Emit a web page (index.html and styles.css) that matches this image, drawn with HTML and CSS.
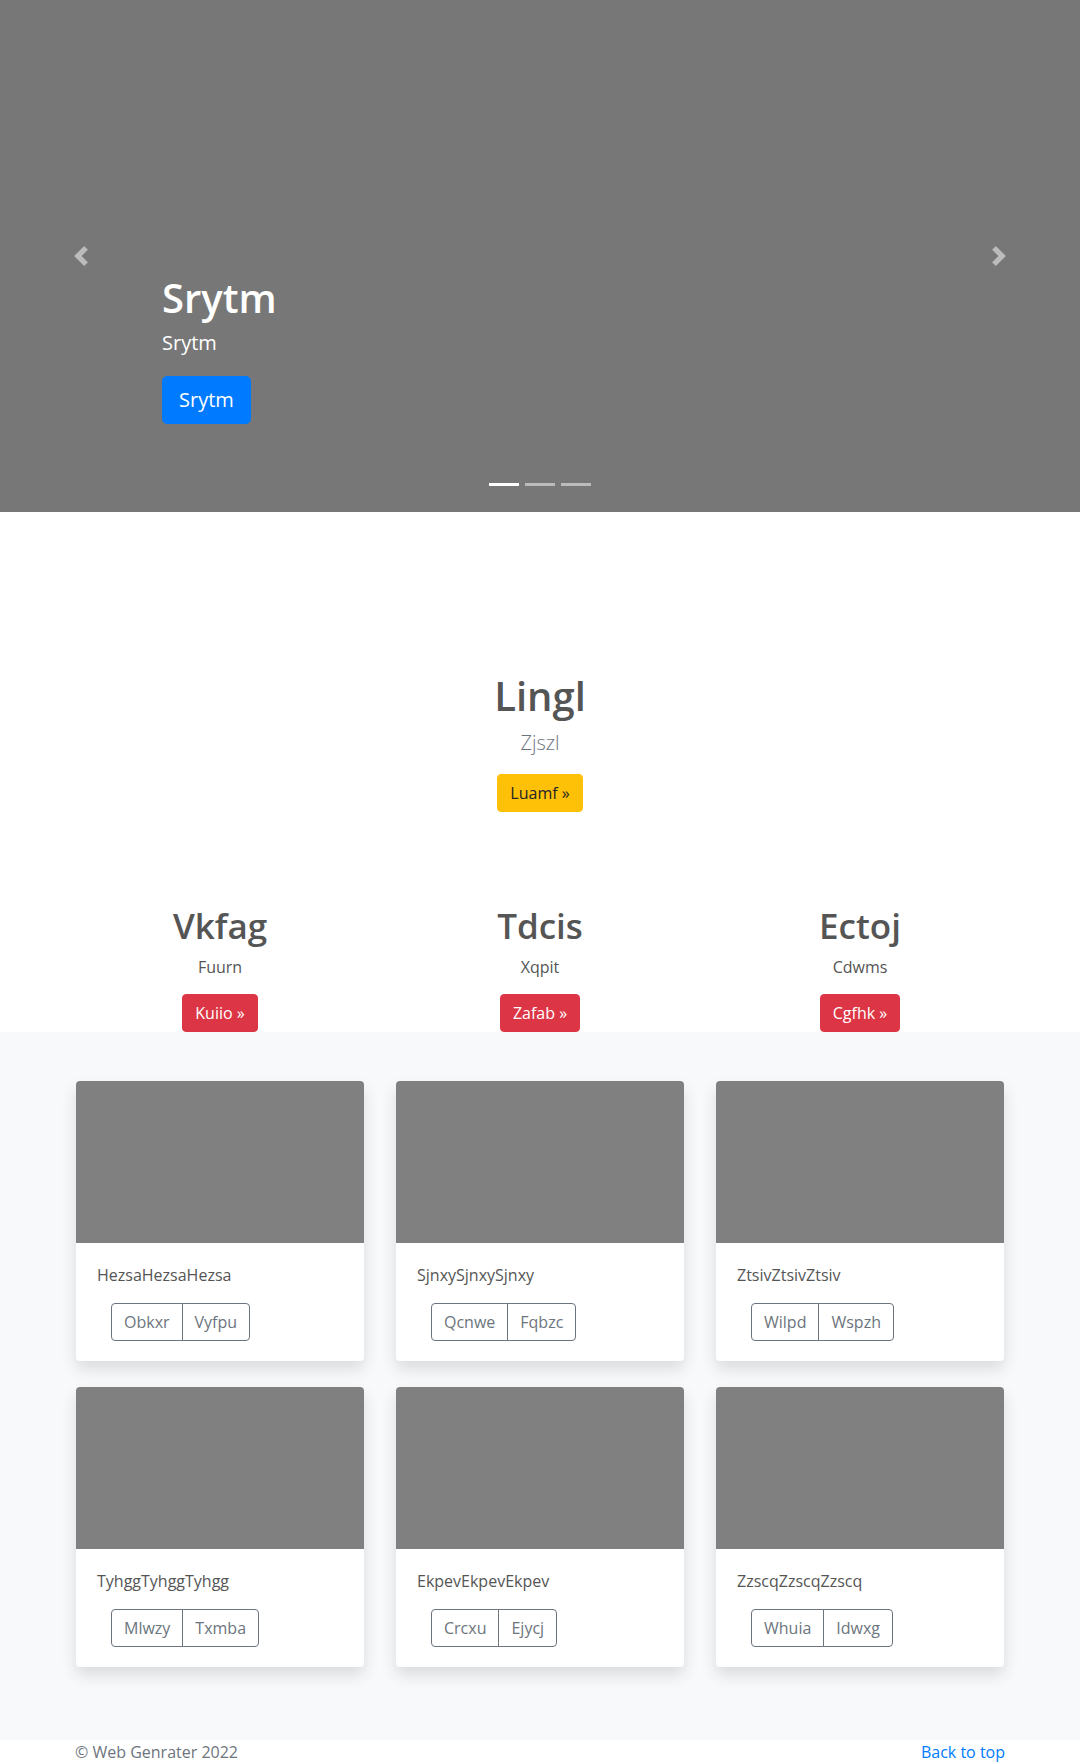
FILE: index.html
```html
<!DOCTYPE html>
<html lang="en">
<head>
<meta charset="utf-8">
<title>Carousel</title>
<link rel="stylesheet" href="styles.css">
</head>
<body>
<main>
  <div class="carousel">
    <div class="slide">
      <div class="caption">
        <h1 class="caption-title">Srytm</h1>
        <p class="caption-text">Srytm</p>
        <div><a class="btn btn-lg btn-primary" href="#">Srytm</a></div>
      </div>
    </div>
    <a class="ctrl ctrl-prev" href="#"><svg width="20" height="20" viewBox="0 0 8 8"><path fill="#fff" d="M5.25 0l-4 4 4 4 1.5-1.5L4.25 4l2.5-2.5L5.25 0z"/></svg></a>
    <a class="ctrl ctrl-next" href="#"><svg width="20" height="20" viewBox="0 0 8 8"><path fill="#fff" d="M2.75 0l-1.5 1.5L3.75 4l-2.5 2.5L2.75 8l4-4-4-4z"/></svg></a>
    <ol class="indicators">
      <li class="active"></li>
      <li></li>
      <li></li>
    </ol>
  </div>

  <section class="intro">
    <h1 class="intro-title">Lingl</h1>
    <p class="lead">Zjszl</p>
    <div><a class="btn btn-warning" href="#">Luamf &raquo;</a></div>

    <div class="marketing">
      <div class="feature">
        <h2 class="feature-title">Vkfag</h2>
        <p class="feature-text">Fuurn</p>
        <div><a class="btn btn-danger" href="#">Kuiio &raquo;</a></div>
      </div>
      <div class="feature">
        <h2 class="feature-title">Tdcis</h2>
        <p class="feature-text">Xqpit</p>
        <div><a class="btn btn-danger" href="#">Zafab &raquo;</a></div>
      </div>
      <div class="feature">
        <h2 class="feature-title">Ectoj</h2>
        <p class="feature-text">Cdwms</p>
        <div><a class="btn btn-danger" href="#">Cgfhk &raquo;</a></div>
      </div>
    </div>
  </section>

  <section class="album">
    <div class="album-grid">
      <div class="card">
        <div class="thumb"></div>
        <div class="card-body">
          <p class="card-text">HezsaHezsaHezsa</p>
          <div class="btn-group"><button class="btn btn-outline">Obkxr</button><button class="btn btn-outline">Vyfpu</button></div>
        </div>
      </div>
      <div class="card">
        <div class="thumb"></div>
        <div class="card-body">
          <p class="card-text">SjnxySjnxySjnxy</p>
          <div class="btn-group"><button class="btn btn-outline">Qcnwe</button><button class="btn btn-outline">Fqbzc</button></div>
        </div>
      </div>
      <div class="card">
        <div class="thumb"></div>
        <div class="card-body">
          <p class="card-text">ZtsivZtsivZtsiv</p>
          <div class="btn-group"><button class="btn btn-outline">Wilpd</button><button class="btn btn-outline">Wspzh</button></div>
        </div>
      </div>
      <div class="card">
        <div class="thumb"></div>
        <div class="card-body">
          <p class="card-text">TyhggTyhggTyhgg</p>
          <div class="btn-group"><button class="btn btn-outline">Mlwzy</button><button class="btn btn-outline">Txmba</button></div>
        </div>
      </div>
      <div class="card">
        <div class="thumb"></div>
        <div class="card-body">
          <p class="card-text">EkpevEkpevEkpev</p>
          <div class="btn-group"><button class="btn btn-outline">Crcxu</button><button class="btn btn-outline">Ejycj</button></div>
        </div>
      </div>
      <div class="card">
        <div class="thumb"></div>
        <div class="card-body">
          <p class="card-text">ZzscqZzscqZzscq</p>
          <div class="btn-group"><button class="btn btn-outline">Whuia</button><button class="btn btn-outline">Idwxg</button></div>
        </div>
      </div>
    </div>
  </section>
</main>

<footer class="footer">
  <p class="copy">&copy; Web Genrater 2022</p>
  <a class="top-link" href="#">Back to top</a>
</footer>
</body>
</html>
```

FILE: styles.css
```css
* { box-sizing: border-box; }

html, body {
  margin: 0;
  padding: 0;
}

body {
  font-family: "Open Sans", "Noto Sans", "Liberation Sans", sans-serif;
  font-size: 16px;
  line-height: 1.5;
  color: #555;
  background: #fff;
}

h1, h2, p { margin: 0; }

a { text-decoration: none; }

/* ---------- buttons ---------- */
.btn {
  display: inline-block;
  font-family: inherit;
  font-size: 16px;
  line-height: 24px;
  padding: 6px 12px;
  border: 1px solid transparent;
  border-radius: 4px;
  cursor: pointer;
  background: transparent;
}

.btn-lg {
  font-size: 20px;
  line-height: 30px;
  padding: 8px 16px;
  border-radius: 5px;
}

.btn-primary { background: #007bff; border-color: #007bff; color: #fff; }
.btn-warning { background: #ffc107; border-color: #ffc107; color: #212529; }
.btn-danger  { background: #dc3545; border-color: #dc3545; color: #fff; }

.btn-outline {
  color: #6c757d;
  border-color: #6c757d;
  background: transparent;
}

/* ---------- carousel ---------- */
.carousel {
  position: relative;
  height: 512px;
  background: #777;
}

.slide {
  height: 100%;
  display: flex;
  flex-direction: column;
  justify-content: flex-end;
  padding: 0 162px 88px;
}

.caption { color: #fff; }

.caption-title {
  font-size: 40px;
  line-height: 48px;
  font-weight: 600;
  margin-bottom: 6px;
}

.caption-text {
  font-size: 20px;
  line-height: 30px;
  margin-bottom: 18px;
}

.ctrl {
  position: absolute;
  top: 0;
  bottom: 0;
  width: 162px;
  display: flex;
  align-items: center;
  justify-content: center;
  opacity: .5;
}

.ctrl svg { display: block; margin-top: -1px; }

.ctrl-prev { left: 0; }
.ctrl-next { right: 0; }

.indicators {
  position: absolute;
  left: 0;
  right: 0;
  bottom: 0;
  margin: 0 0 16px;
  padding: 0;
  list-style: none;
  display: flex;
  justify-content: center;
}

.indicators li {
  width: 30px;
  height: 23px;
  margin: 0 3px;
  border-top: 10px solid transparent;
  border-bottom: 10px solid transparent;
  background: #fff;
  background-clip: padding-box;
  opacity: .5;
}

.indicators li.active { opacity: 1; }

/* ---------- intro & marketing ---------- */
.intro {
  text-align: center;
  padding-top: 160px;
}

.intro-title {
  font-size: 40px;
  line-height: 48px;
  font-weight: 600;
  color: #555;
  margin-bottom: 8px;
}

.lead {
  font-size: 20px;
  line-height: 30px;
  font-weight: 300;
  color: #6c757d;
  margin-bottom: 16px;
}

.marketing {
  width: 960px;
  margin: 93px auto 0;
  display: grid;
  grid-template-columns: repeat(3, 1fr);
}

.feature { padding: 0 15px; }

.feature-title {
  font-size: 35px;
  line-height: 42px;
  font-weight: 600;
  color: #555;
  margin-bottom: 8px;
}

.feature-text {
  color: #555;
  margin-bottom: 15px;
}

/* ---------- album ---------- */
.album {
  background: #f8f9fa;
  padding: 49px 0 73px;
}

.album-grid {
  width: 928px;
  margin: 0 auto;
  display: grid;
  grid-template-columns: repeat(3, 288px);
  column-gap: 32px;
  row-gap: 26px;
}

.card {
  background: #fff;
  border-radius: 4px;
  overflow: hidden;
  box-shadow: 0 8px 16px rgba(0,0,0,.12);
}

.thumb {
  height: 162px;
  background: #808080;
}

.card-body { padding: 20px 20px 20px 21px; }

.card-text {
  color: #555;
  margin-bottom: 16px;
}

.btn-group {
  display: inline-flex;
  margin-left: 14px;
}

.btn-group .btn:first-child {
  border-top-right-radius: 0;
  border-bottom-right-radius: 0;
}

.btn-group .btn + .btn {
  margin-left: -1px;
  border-top-left-radius: 0;
  border-bottom-left-radius: 0;
}

/* ---------- footer ---------- */
.footer {
  width: 930px;
  margin: 0 auto;
  display: flex;
  justify-content: space-between;
  color: #6c757d;
}

.top-link { color: #007bff; }
```
